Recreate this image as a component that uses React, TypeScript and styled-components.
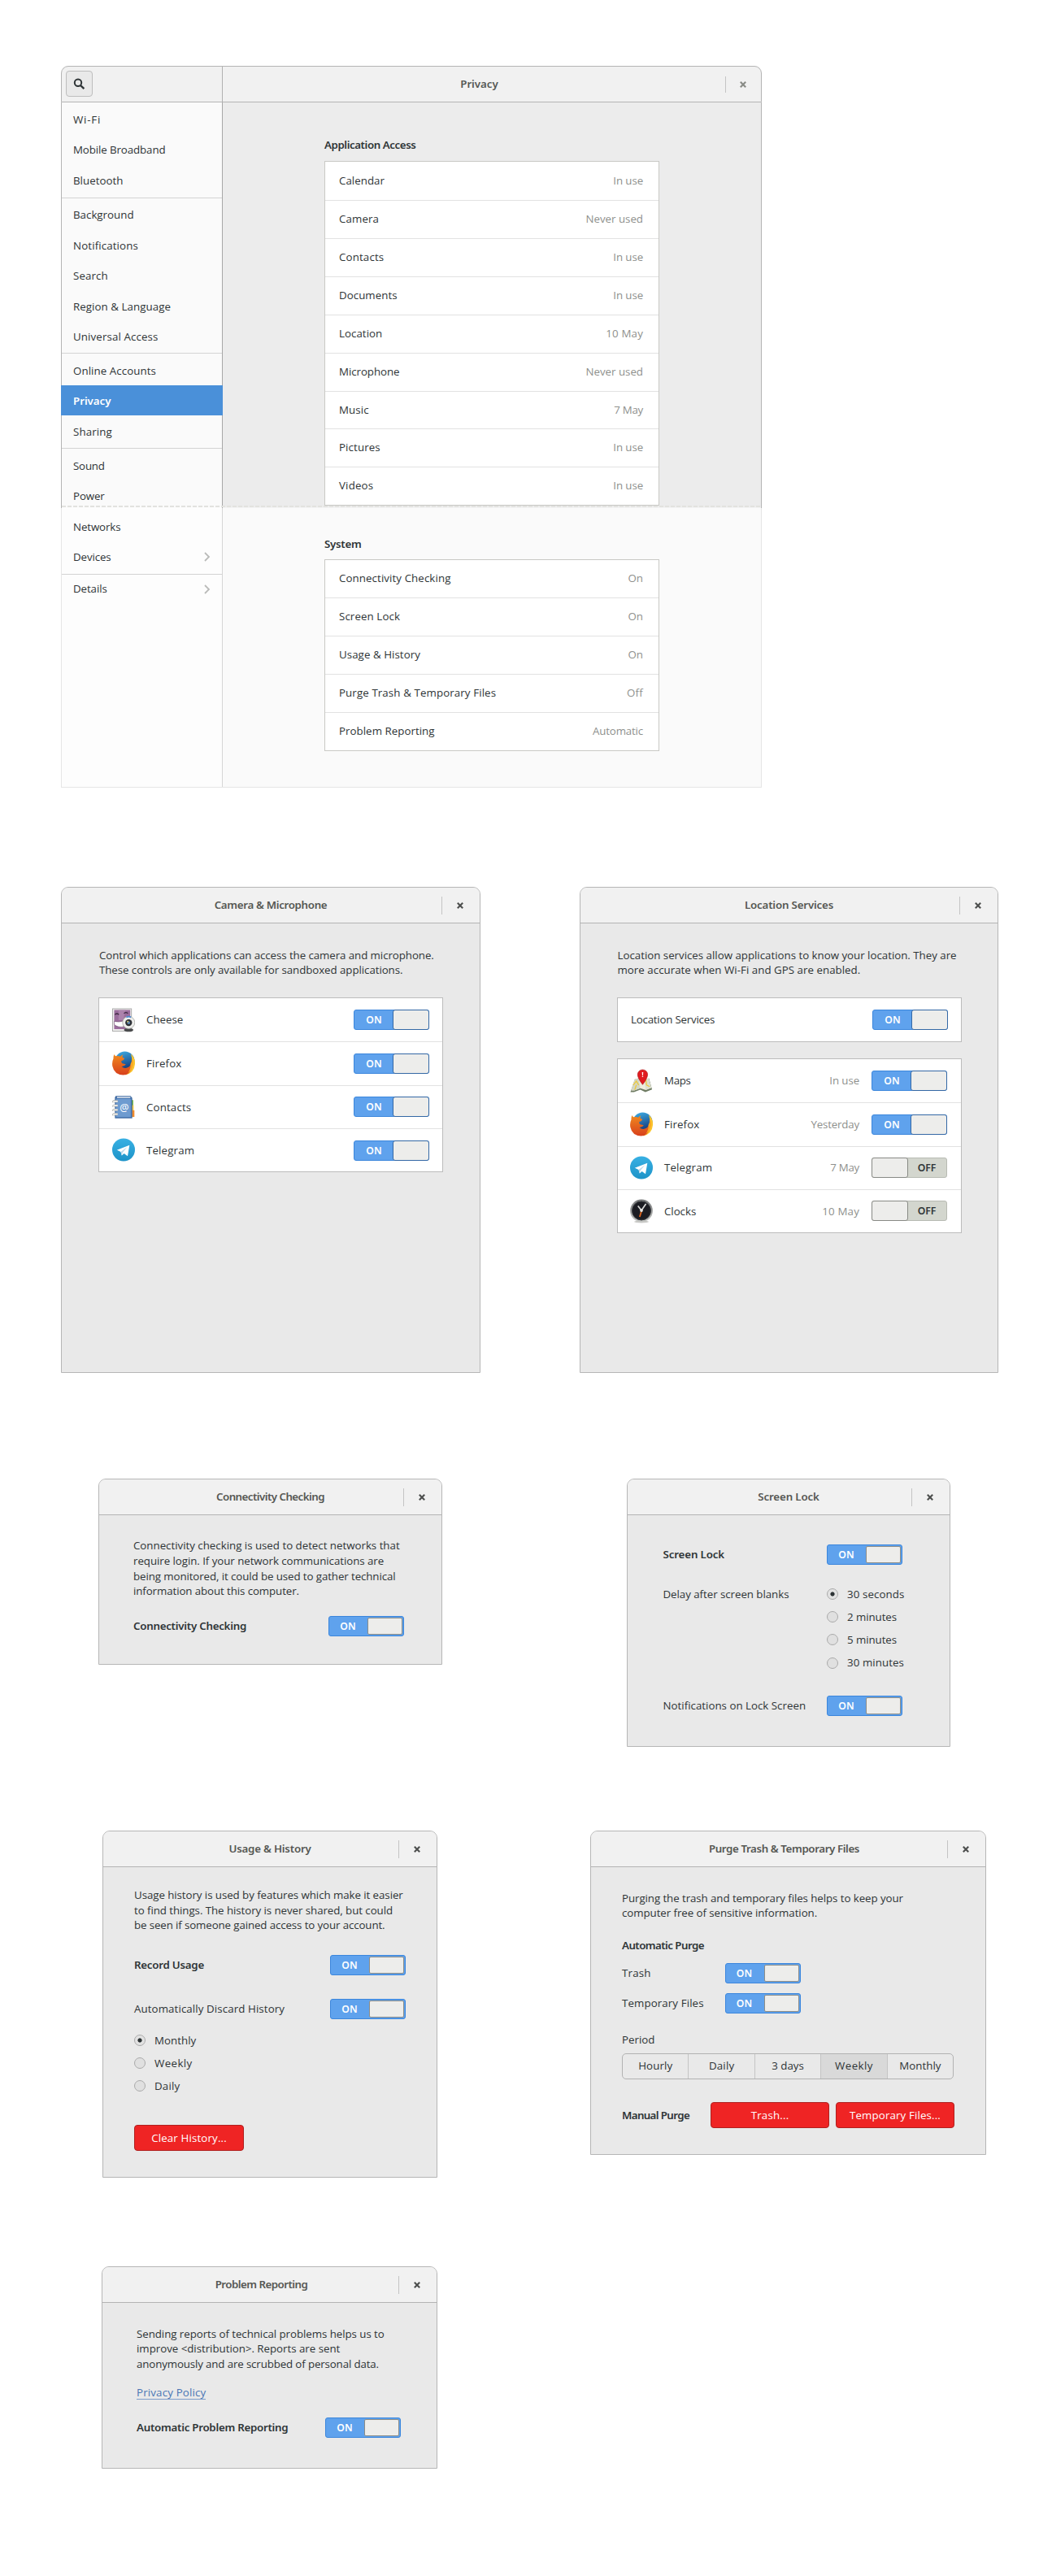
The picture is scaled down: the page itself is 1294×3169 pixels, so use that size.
import React from "react";
import styled, { createGlobalStyle, css } from "styled-components";

const Global = createGlobalStyle`
  body { margin: 0; background: #fff; }
  * { box-sizing: border-box; }
`;

const TRACK: Record<string, number> = {
  "Wi-Fi": 0.8, "Mobile Broadband": -0.1, Bluetooth: 0.03, Background: 0.01, Notifications: 0.13, Search: 0.1,
  "Region & Language": 0.06, "Universal Access": 0.12, "Online Accounts": 0.08, Sharing: 0.1, Sound: -0.2, Power: -0.1,
  Networks: -0.1, Devices: -0.11, Details: -0.08, Calendar: 0.04, Camera: 0.11, Contacts: 0.15, Documents: 0.04,
  Location: 0.04, Microphone: -0.05, Music: 0.1, Pictures: 0.11, Videos: 0.18, "Never used": -0.01, "In use": -0.1,
  "10 May": 0.17, Automatic: -0.16, Off: 0.24, "Connectivity Checking": 0.09, "Screen Lock": 0.1, "Usage & History": 0.06,
  "Purge Trash & Temporary Files": 0.11, "Problem Reporting": 0.04, Firefox: 0.12, Telegram: 0.15, Maps: -0.31,
  Clocks: -0.04, Yesterday: -0.16, "7 May": -0.27, "Location Services": -0.22,
  "Control which applications can access the camera and microphone.": -0.07,
  "These controls are only available for sandboxed applications.": -0.06,
  "Location services allow applications to know your location. They are": -0.01,
  "more accurate when Wi-Fi and GPS are enabled.": 0.03,
  "Connectivity checking is used to detect networks that": -0.01,
  "require login. If your network communications are": -0.05,
  "being monitored, it could be used to gather technical": -0.09,
  "information about this computer.": -0.09,
  "Usage history is used by features which make it easier": -0.06,
  "to find things. The history is never shared, but could": -0.06,
  "be seen if someone gained access to your account.": -0.11,
  "Purging the trash and temporary files helps to keep your": -0.07,
  "computer free of sensitive information.": -0.06,
  "Sending reports of technical problems helps us to": -0.05,
  "improve <distribution>. Reports are sent": -0.02,
  "anonymously and are scrubbed of personal data.": -0.13,
  "Notifications on Lock Screen": 0.01, "Automatically Discard History": 0.1, "Delay after screen blanks": -0.04,
  "30 seconds": 0.1, "2 minutes": -0.06, "5 minutes": -0.06, "30 minutes": 0.08, Monthly: 0.04, Weekly: 0.41, Daily: 0.18,
  "Clear History...": 0.15, Trash: 0.21, "Temporary Files": 0.11, Period: 0.02, Hourly: 0.1, "3 days": 0.02,
  "Trash...": 0.2, "Temporary Files...": 0.14, "Privacy Policy": 0.17,
};
const TRACK_BOLD: Record<string, number> = {
  "Application Access": -0.42, System: -0.27, Privacy: -0.03, "Camera & Microphone": -0.32, "Location Services": -0.18,
  "Connectivity Checking": -0.25, "Screen Lock": -0.13, "Usage & History": -0.21, "Purge Trash & Temporary Files": -0.39,
  "Problem Reporting": -0.53, "Automatic Problem Reporting": -0.26, "Record Usage": -0.24, "Automatic Purge": -0.55,
  "Manual Purge": -0.62,
};

const Page = styled.main`
  width: 1294px;
  height: 3169px;
  padding: 81px 0 0 75px;
  display: flex;
  flex-direction: column;
  overflow: hidden;
  font: 13.3px/18.7px "Open Sans", "Noto Sans", sans-serif;
  color: #2e3436;
`;

const Shelf = styled.section<{ $top: number; $indent?: number; $gap?: number }>`
  display: flex;
  align-items: flex-start;
  margin-top: ${(p) => p.$top}px;
  padding-left: ${(p) => p.$indent ?? 0}px;
  gap: ${(p) => p.$gap ?? 0}px;
`;

const Text = styled.span<{ $ls: number; $bold?: boolean; $muted?: boolean }>`
  white-space: nowrap;
  letter-spacing: ${(p) => p.$ls}px;
  ${(p) => p.$bold && css`font-family: "Noto Sans", sans-serif; font-weight: 600;`}
  ${(p) => p.$muted && css`color: #8e908d;`}
`;
function T({ t, bold, muted, ls }: { t: string; bold?: boolean; muted?: boolean; ls?: number }) {
  return <Text $ls={ls ?? (bold ? TRACK_BOLD : TRACK)[t] ?? 0} $bold={bold} $muted={muted}>{t}</Text>;
}

const Frame = styled.article<{ $w: number; $h: number }>`
  width: ${(p) => p.$w}px;
  height: ${(p) => p.$h}px;
  display: flex;
  flex-direction: column;
  border: 1px solid #b6b6b6;
  border-radius: 9px 9px 0 0;
  background: #e9e9e9;
  overflow: hidden;
`;

const HeaderBar = styled.header`
  flex: none;
  display: grid;
  grid-template-columns: 1fr auto;
  align-items: center;
  height: 44px;
  background: #f1f1f1;
  border-bottom: 1px solid #b4b4b4;
`;

const Title = styled.h2<{ $left?: number }>`
  margin: 0;
  padding-left: ${(p) => p.$left ?? 47}px;
  text-align: center;
  font-size: 13.3px;
  color: #555753;
  white-space: nowrap;
`;

const CloseBox = styled.div<{ $dim?: boolean; $w?: number }>`
  width: ${(p) => p.$w ?? 47}px;
  height: ${(p) => (p.$dim ? 20 : 22)}px;
  padding-right: 1.5px;
  display: flex;
  align-items: center;
  justify-content: center;
  border-left: 1px solid #c4c4c4;
  color: ${(p) => (p.$dim ? "#888a85" : "#4c4e4d")};
`;

const CloseIcon = () => (
  <svg width="8" height="8" viewBox="0 0 8 8" fill="none" stroke="currentColor" strokeWidth="2.1">
    <path d="M0.8 0.8 7.2 7.2M7.2 0.8 0.8 7.2" />
  </svg>
);

function Dialog(p: { w: number; h: number; title: string; ls?: number; titleLeft?: number; children: React.ReactNode }) {
  return (
    <Frame $w={p.w} $h={p.h}>
      <HeaderBar>
        <Title $left={p.titleLeft}><T t={p.title} bold ls={p.ls} /></Title>
        <CloseBox><CloseIcon /></CloseBox>
      </HeaderBar>
      {p.children}
    </Frame>
  );
}

/* ---------- switch ---------- */
const Track = styled.span<{ $on: boolean }>`
  flex: none;
  display: flex;
  width: 93px;
  height: 25px;
  border: 1px solid ${(p) => (p.$on ? "#3b86dc" : "#b7bab3")};
  border-radius: 3px;
  background: ${(p) => (p.$on ? "#5fa2ed" : "#d3d6ce")};
  color: ${(p) => (p.$on ? "#fff" : "#2e3436")};
`;
const State = styled.span`
  flex: 1;
  text-align: center;
  font: 600 12.2px/23px "Noto Sans", sans-serif;
`;
const Knob = styled.span<{ $on: boolean; $inset?: boolean }>`
  width: 45px;
  margin: -1px;
  border: 1px solid ${(p) => (p.$on ? "#3468a5" : "#888a85")};
  border-radius: 3px;
  background: #ededeb;
  ${(p) => p.$inset && css`
    width: 43px;
    margin: 1px;
    border-color: #8c8d88;
    border-radius: 2px;
  `}
`;
function Switch({ on = true, inset }: { on?: boolean; inset?: boolean }) {
  return (
    <Track $on={on}>
      {!on && <Knob $on={false} />}
      <State>{on ? "ON" : "OFF"}</State>
      {on && <Knob $on $inset={inset} />}
    </Track>
  );
}

/* ---------- main window ---------- */
const Main = styled.article`
  width: 862px;
  height: 888px;
  display: flex;
  flex-direction: column;
`;
const MainHeader = styled.header`
  flex: none;
  display: flex;
  height: 45px;
  border: 1px solid #b4b4b4;
  border-radius: 9px 9px 0 0;
  background: #f1f1f1;
`;
const HeaderLeft = styled.div`
  width: 198px;
  padding: 5px;
  border-right: 1px solid #b0b0b0;
`;
const HeaderRight = styled.div`
  flex: 1;
  display: grid;
  grid-template-columns: 1fr auto;
  align-items: center;
`;
const SearchButton = styled.button`
  display: flex;
  align-items: center;
  justify-content: center;
  width: 33px;
  height: 32px;
  padding: 0;
  border: 1px solid #bdbdbd;
  border-radius: 4px;
  background: #e9e9e9;
  color: #2e3436;
`;
const MainBody = styled.div`
  position: relative;
  flex: 1;
  display: flex;
  border-style: solid;
  border-width: 0 1px 1px;
  border-image: linear-gradient(#b4b4b4 0 499px, #e6e6e6 499px) 1;
  background: linear-gradient(#ececec 0 498px, #fafafa 499px);
  &::after {
    content: "";
    position: absolute;
    left: 0;
    right: 0;
    top: 496px;
    height: 2px;
    background: repeating-linear-gradient(90deg, #e2e2df 0 5px, transparent 5px 7px);
  }
`;
const Sidebar = styled.nav`
  width: 197px;
  padding-top: 1px;
  background: linear-gradient(#fafafa 0 498px, #fdfdfd 499px);
`;
const Divider = styled.div`
  width: 1px;
  background: linear-gradient(#a8a8a8 0 499px, #d6d6d6 499px);
`;
const NavRow = styled.div<{ $active?: boolean }>`
  display: flex;
  align-items: center;
  justify-content: space-between;
  height: 37.5px;
  padding: 2.4px 14px 0 14px;
  ${(p) => p.$active && css`
    position: relative;
    margin: 0 -1px;
    padding: 2px 15px 0 15px;
    background: #4a90d9;
    color: #fff;
  `}
`;
const NavRule = styled.hr<{ $before: number; $after: number }>`
  height: 1px;
  border: 0;
  background: #d3d3d3;
  margin: ${(p) => p.$before}px 0 ${(p) => p.$after}px;
`;
const Content = styled.div`
  padding: 41.6px 125px 0;
`;
const Heading = styled.h3<{ $top?: number; $bottom: number }>`
  margin: ${(p) => p.$top ?? 0}px 0 ${(p) => p.$bottom}px;
  font-size: 13.3px;
  line-height: 20px;
`;
const List = styled.ul<{ $w: number; $warm?: boolean }>`
  width: ${(p) => p.$w}px;
  margin: 0;
  padding: 0;
  list-style: none;
  background: #fff;
  border: 1px solid ${(p) => (p.$warm ? "#c9c9c5" : "#bcbcbc")};
`;
const Item = styled.li<{ $h: number; $left: number; $right: number; $lift?: number }>`
  display: flex;
  align-items: center;
  height: ${(p) => p.$h}px;
  padding: 0 ${(p) => p.$right}px ${(p) => p.$lift ?? 0}px ${(p) => p.$left}px;
  & + & { border-top: 1px solid #e2e2e2; }
`;
const Spacer = styled.span`flex: 1;`;
const Chevron = () => (
  <svg width="8" height="12" viewBox="0 0 8 12" fill="none" stroke="#b9bab8" strokeWidth="1.8">
    <path d="M1 1 6 6 1 11" />
  </svg>
);

type Nav = { t: string; active?: boolean; more?: boolean } | { before: number; after: number };
const NAV: Nav[] = [
  { t: "Wi-Fi" }, { t: "Mobile Broadband" }, { t: "Bluetooth" },
  { before: 3.5, after: 0.5 },
  { t: "Background" }, { t: "Notifications" }, { t: "Search" }, { t: "Region & Language" }, { t: "Universal Access" },
  { before: 2, after: 1 },
  { t: "Online Accounts" }, { t: "Privacy", active: true }, { t: "Sharing" },
  { before: 2.5, after: 1 },
  { t: "Sound" }, { t: "Power" }, { t: "Networks" }, { t: "Devices", more: true },
  { before: 3, after: -2.3 },
  { t: "Details", more: true },
];
const ACCESS = [
  ["Calendar", "In use"], ["Camera", "Never used"], ["Contacts", "In use"], ["Documents", "In use"], ["Location", "10 May"],
  ["Microphone", "Never used"], ["Music", "7 May"], ["Pictures", "In use"], ["Videos", "In use"],
];
const SYSTEM = [
  ["Connectivity Checking", "On"], ["Screen Lock", "On"], ["Usage & History", "On"],
  ["Purge Trash & Temporary Files", "Off"], ["Problem Reporting", "Automatic"],
];

function SettingList({ rows }: { rows: string[][] }) {
  return (
    <List $w={412} $warm>
      {rows.map(([name, value]) => (
        <Item key={name} $h={46.85} $left={17} $right={19} $lift={1}>
          <T t={name} /><Spacer /><T t={value} muted />
        </Item>
      ))}
    </List>
  );
}

function PrivacyWindow() {
  return (
    <Main>
      <MainHeader>
        <HeaderLeft>
          <SearchButton aria-label="Search">
            <svg width="15" height="15" viewBox="0 0 15 15" fill="none" stroke="currentColor">
              <circle cx="6" cy="5.8" r="4.2" strokeWidth="2" />
              <path d="M9 9 13.4 13.2" strokeWidth="2.4" />
            </svg>
          </SearchButton>
        </HeaderLeft>
        <HeaderRight>
          <Title $left={13}><T t="Privacy" bold /></Title>
          <CloseBox $dim $w={44}><CloseIcon /></CloseBox>
        </HeaderRight>
      </MainHeader>
      <MainBody>
        <Sidebar>
          {NAV.map((n, i) => "t" in n ? (
            <NavRow key={i} $active={n.active}><T t={n.t} bold={n.active} />{n.more && <Chevron />}</NavRow>
          ) : <NavRule key={i} $before={n.before} $after={n.after} />)}
        </Sidebar>
        <Divider />
        <Content>
          <Heading $bottom={10.9}><T t="Application Access" bold /></Heading>
          <SettingList rows={ACCESS} />
          <Heading $top={36.5} $bottom={9}><T t="System" bold /></Heading>
          <SettingList rows={SYSTEM} />
        </Content>
      </MainBody>
    </Main>
  );
}

/* ---------- application icons ---------- */
const IconSlot = styled.span`
  flex: none;
  display: flex;
  width: 28px;
  height: 30px;
  margin-right: 14px;
`;
const Cheese = () => (
  <svg width="29" height="30" viewBox="0 0 29 30">
    <rect x="0.5" y="0.5" width="24" height="28.5" fill="#f3f3f1" stroke="#a9a9a9" />
    <rect x="2.5" y="2" width="20.5" height="24.5" fill="#9a6c9c" />
    <path d="M8 2h9l-3 13H8z" fill="#b48bb4" opacity=".7" />
    <path d="M3.5 8q2.5-2.5 5 0M15 6.500q2.500-2.500 5 0" fill="none" stroke="#402a44" strokeWidth="1.300" />
    <path d="M2.500 16.500q6 1.500 12-.5v7.500q-8 1-12-3z" fill="#fff" stroke="#6c4a6e" strokeWidth=".6" />
    <ellipse cx="21" cy="27.500" rx="6" ry="2.300" fill="#4a4b4d" />
    <circle cx="21" cy="18" r="7.800" fill="#eeeeec" stroke="#a5a6a3" strokeWidth=".8" />
    <path d="M18 11.300q3-1.800 6 0" fill="none" stroke="#4b87cf" strokeWidth="1.800" />
    <circle cx="21" cy="18.200" r="4.300" fill="#2b2e33" />
    <circle cx="21" cy="18.200" r="2" fill="#5f87b0" />
    <circle cx="19.800" cy="16.800" r=".9" fill="#f4e36a" />
  </svg>
);
const Firefox = () => (
  <svg width="28" height="30" viewBox="0 0 28 30">
    <defs>
      <linearGradient id="fxo" x1="0" y1="0" x2="0" y2="1"><stop offset="0" stopColor="#f08a1f" /><stop offset="1" stopColor="#d8401c" /></linearGradient>
      <linearGradient id="fxb" x1="0" y1="0" x2="0.300" y2="1"><stop offset="0" stopColor="#3fb1e8" /><stop offset="1" stopColor="#123a7c" /></linearGradient>
    </defs>
    <circle cx="15.500" cy="12.500" r="12" fill="url(#fxb)" />
    <path d="M23 3.500q5.500 5 5 12.500-.8 11-12 13.500 9-7 8.600-15.500Q24.500 8 23 3.500z" fill="#fbc52d" />
    <path d="M2.500 4Q3 6 4.500 6.300q3-1 5.500.4 1.500-2 3.500-2.200-1.300 1.800-.8 3.500 2.500.2 2.300 1.500-1 2-3.500 2.500-.8 2 1 3.200 2.500.3 4.300 1-2 3-5.300 2.800 4 3.700 9 .5 4-3 3.300-9.500 2 4.500.7 9.500Q22 29.500 13.500 29.500 2.500 29 .3 18.500-.5 13 1.500 9.500 1.300 6 2.500 4z" fill="url(#fxo)" />
    <path d="M24.500 9q2.500 5 .6 10.500-1.600 5-5.600 7.500 4-7 3-11 2-3 2-7z" fill="#f9a825" />
  </svg>
);
const ContactsIcon = () => (
  <svg width="29" height="31" viewBox="0 0 29 31">
    <path d="M25 6h1.800v7H25z" fill="#6cb52d" /><path d="M25 12.500h2.300v7H25z" fill="#f0c53a" /><path d="M25 19h3.300v8.500H25z" fill="#ef8a2c" />
    <path d="M4.500.8h19l2 2.500v26H3.500V2.500z" fill="#3a669f" />
    <path d="M6 1.800h17.500l-.5 1.500H6z" fill="#e9eef5" />
    <rect x="4.500" y="4" width="19.500" height="24" fill="#6e9bd0" stroke="#4a78b4" strokeWidth=".8" />
    <text x="15.300" y="20.500" textAnchor="middle" fontFamily="Noto Sans, sans-serif" fontSize="13" fill="#fff">@</text>
    <g fill="none" stroke="#9b9c99" strokeWidth="3"><path d="M7 7.500H3q-1.500 0-1.500 1.500M7 13H3q-1.500 0-1.500 1.500M7 18.500H3q-1.500 0-1.500 1.500M7 24H3q-1.500 0-1.500 1.500" /></g>
    <g fill="none" stroke="#f2f2f0" strokeWidth="1.800"><path d="M7 7.500H3q-1.500 0-1.500 1.500M7 13H3q-1.500 0-1.500 1.500M7 18.500H3q-1.500 0-1.500 1.500M7 24H3q-1.500 0-1.500 1.500" /></g>
  </svg>
);
const Telegram = () => (
  <svg width="28" height="29" viewBox="0 0 28 29">
    <defs><linearGradient id="tg" x1="0" y1="0" x2="0" y2="1"><stop offset="0" stopColor="#38b0e3" /><stop offset="1" stopColor="#1d93c8" /></linearGradient></defs>
    <circle cx="14" cy="14.500" r="14" fill="url(#tg)" />
    <path d="M5.800 14.700 21.300 8.700 19 22.300 14.600 19 11.800 21.500 10.500 17z" fill="#fff" />
    <path d="M10.500 17 18.500 11 12.800 18 11.800 21.500z" fill="#bcd9ea" />
  </svg>
);
const MapsIcon = () => (
  <svg width="29" height="30" viewBox="0 0 29 30">
    <path d="M6 13 11 11.500 18 14 24 11.500 28 25.500 19.500 29 13 26 5 29H.5z" fill="#6e7b63" />
    <path d="M6 12.500 11 11.500 18 13.500 23.500 11.500 27 23.500 20 26.500 13 24 5.500 27H1.500z" fill="#eeecdc" />
    <path d="M11 11.500 13 24 5.500 27H1.500L6 12.500z" fill="#d3d6c6" /><path d="M18 13.500 20 26.500 27 23.500 23.500 11.500z" fill="#dcdfd0" />
    <path d="M4 20 8 15 11 20M20 13 21 20 25 22M8 20 6 26" fill="none" stroke="#ecc93f" strokeWidth="1.400" />
    <path d="M16 19.500Q9.600 11 9.600 6.600a6.400 6.200 0 0 1 12.800 0Q22.400 11 16 19.500z" fill="#e01b20" stroke="#a90f12" strokeWidth=".6" />
    <path d="M15.200 3.500h1.600l-.3 4.200h-1zM15.300 8.500h1.400v1.200h-1.400z" fill="#fff" />
  </svg>
);
const Clocks = () => (
  <svg width="28" height="30" viewBox="0 0 28 30">
    <defs><linearGradient id="ck" x1="0" y1="0" x2="0" y2="1"><stop offset="0" stopColor="#77797a" /><stop offset="1" stopColor="#c3c5c2" /></linearGradient></defs>
    <ellipse cx="14" cy="28" rx="9" ry="1.500" fill="#c9c9c7" />
    <circle cx="14" cy="14.500" r="12.800" fill="#1b1c22" stroke="url(#ck)" strokeWidth="2.200" />
    <circle cx="14" cy="14.500" r="11.300" fill="none" stroke="#34363a" strokeWidth="1" />
    <path d="M14 14 19.500 6M14 14 9.700 8.500" stroke="#d9dad8" strokeWidth="1.700" fill="none" />
    <path d="M14 15 11.800 22" stroke="#e0641c" strokeWidth="1.800" />
    <circle cx="14" cy="14" r="1.900" fill="#e6e6e4" />
  </svg>
);

/* ---------- dialog parts ---------- */
const Body = styled.div<{ $top: number; $left: number; $right: number }>`
  display: flex;
  flex-direction: column;
  align-items: stretch;
  padding: ${(p) => p.$top}px ${(p) => p.$right}px 0 ${(p) => p.$left}px;
`;
const ParaBox = styled.p<{ $left: number }>`
  display: flex;
  flex-direction: column;
  margin: 0;
  padding-left: ${(p) => p.$left}px;
`;
const Para = ({ lines, left = 0 }: { lines: string[]; left?: number }) => (
  <ParaBox $left={left}>{lines.map((l) => <T key={l} t={l} />)}</ParaBox>
);
const Line = styled.div<{ $top?: number; $gap?: number; $h?: number }>`
  display: flex;
  align-items: center;
  height: ${(p) => p.$h ?? 25}px;
  margin-top: ${(p) => p.$top ?? 0}px;
  gap: ${(p) => p.$gap ?? 0}px;
`;
const FieldName = styled.span`
  width: 126.5px;
`;
const RadioGroup = styled.div<{ $top?: number }>`
  display: flex;
  flex-direction: column;
  width: 93px;
  gap: 9.2px;
  margin-top: ${(p) => p.$top ?? 0}px;
`;
const RadioRow = styled.label`
  display: flex;
  align-items: center;
  gap: 11px;
  height: 19px;
`;
const Dot = styled.span<{ $on?: boolean }>`
  flex: none;
  width: 14px;
  height: 14px;
  border: 1px solid #aaa;
  border-radius: 50%;
  background: ${(p) => (p.$on ? "radial-gradient(circle, #2e3436 0 2.2px, #e2e2e2 3px)" : "#e0e0e0")};
`;
const Radio = ({ t, on }: { t: string; on?: boolean }) => (
  <RadioRow><Dot $on={on} /><T t={t} /></RadioRow>
);
const DangerButton = styled.button<{ $w: number }>`
  flex: none;
  width: ${(p) => p.$w}px;
  height: 32px;
  padding: 0;
  border: 1px solid #b0201f;
  border-radius: 4px;
  background: #ef2424;
  color: #fff;
  font: inherit;
`;
const Segments = styled.div`
  display: flex;
  width: 408px;
  height: 32px;
  margin-top: 7px;
  border: 1px solid #b2b2b2;
  border-radius: 5px;
  overflow: hidden;
`;
const Segment = styled.div<{ $active?: boolean }>`
  flex: 1;
  display: flex;
  align-items: center;
  justify-content: center;
  background: ${(p) => (p.$active ? "#d9d9d9" : "transparent")};
  & + & { border-left: 1px solid #c4c4c4; }
`;
const Columns = styled.div<{ $top: number }>`
  display: flex;
  justify-content: space-between;
  align-items: flex-start;
  margin-top: ${(p) => p.$top}px;
`;
const Link = styled.a`
  align-self: flex-start;
  margin-top: 17px;
  color: #4a76b4;
  line-height: 16px;
  border-bottom: 1px solid #7f9fcb;
`;
const Stack = styled.div<{ $gap: number; $top: number }>`
  display: flex;
  flex-direction: column;
  gap: ${(p) => p.$gap}px;
  margin-top: ${(p) => p.$top}px;
`;
const Value = styled.span`
  margin-right: 15px;
`;

const CAMERA_APPS = [
  { t: "Cheese", icon: <Cheese /> }, { t: "Firefox", icon: <Firefox /> },
  { t: "Contacts", icon: <ContactsIcon /> }, { t: "Telegram", icon: <Telegram /> },
];
const LOCATION_APPS = [
  { t: "Maps", v: "In use", on: true, icon: <MapsIcon /> }, { t: "Firefox", v: "Yesterday", on: true, icon: <Firefox /> },
  { t: "Telegram", v: "7 May", on: false, icon: <Telegram /> }, { t: "Clocks", v: "10 May", on: false, icon: <Clocks /> },
];
const PERIODS = ["Hourly", "Daily", "3 days", "Weekly", "Monthly"];

export default function App() {
  return (
    <Page>
      <Global />
      <PrivacyWindow />

      <Shelf $top={122} $gap={122}>
        <Dialog w={516} h={598} title="Camera & Microphone">
          <Body $top={29.5} $left={45} $right={45}>
            <Para left={1} lines={[
              "Control which applications can access the camera and microphone.",
              "These controls are only available for sandboxed applications.",
            ]} />
            <Stack $top={24} $gap={0}>
              <List $w={424}>
                {CAMERA_APPS.map((a) => (
                  <Item key={a.t} $h={53.4} $left={16} $right={16}>
                    <IconSlot>{a.icon}</IconSlot><T t={a.t} /><Spacer /><Switch />
                  </Item>
                ))}
              </List>
            </Stack>
          </Body>
        </Dialog>
        <Dialog w={515} h={598} title="Location Services">
          <Body $top={29.5} $left={45} $right={45}>
            <Para left={0.5} lines={[
              "Location services allow applications to know your location. They are",
              "more accurate when Wi-Fi and GPS are enabled.",
            ]} />
            <Stack $top={24} $gap={20}>
              <List $w={424}>
                <Item $h={53} $left={16} $right={16}><T t="Location Services" /><Spacer /><Switch /></Item>
              </List>
              <List $w={424}>
                {LOCATION_APPS.map((a) => (
                  <Item key={a.t} $h={53.3} $left={15} $right={17}>
                    <IconSlot>{a.icon}</IconSlot><T t={a.t} /><Spacer /><Value><T t={a.v} muted /></Value><Switch on={a.on} />
                  </Item>
                ))}
              </List>
            </Stack>
          </Body>
        </Dialog>
      </Shelf>

      <Shelf $top={130} $indent={46} $gap={227}>
        <Dialog w={423} h={229} title="Connectivity Checking" ls={-0.54}>
          <Body $top={28.3} $left={42} $right={46}>
            <Para lines={[
              "Connectivity checking is used to detect networks that",
              "require login. If your network communications are",
              "being monitored, it could be used to gather technical",
              "information about this computer.",
            ]} />
            <Line $top={21}><T t="Connectivity Checking" bold /><Spacer /><Switch inset /></Line>
          </Body>
        </Dialog>
        <Dialog w={398} h={330} title="Screen Lock">
          <Body $top={36} $left={43.5} $right={58}>
            <Line><T t="Screen Lock" bold /><Spacer /><Switch inset /></Line>
            <Columns $top={26.5}>
              <T t="Delay after screen blanks" />
              <RadioGroup>
                <Radio t="30 seconds" on /><Radio t="2 minutes" /><Radio t="5 minutes" /><Radio t="30 minutes" />
              </RadioGroup>
            </Columns>
            <Line $top={30.5}><T t="Notifications on Lock Screen" /><Spacer /><Switch inset /></Line>
          </Body>
        </Dialog>
      </Shelf>

      <Shelf $top={103} $indent={51} $gap={188}>
        <Dialog w={412} h={427} title="Usage & History">
          <Body $top={25} $left={38} $right={38}>
            <Para lines={[
              "Usage history is used by features which make it easier",
              "to find things. The history is never shared, but could",
              "be seen if someone gained access to your account.",
            ]} />
            <Line $top={27}><T t="Record Usage" bold /><Spacer /><Switch inset /></Line>
            <Line $top={29}><T t="Automatically Discard History" /><Spacer /><Switch inset /></Line>
            <RadioGroup $top={16.5}><Radio t="Monthly" on /><Radio t="Weekly" /><Radio t="Daily" /></RadioGroup>
            <Line $top={38} $h={32}><DangerButton $w={135}><T t="Clear History..." /></DangerButton></Line>
          </Body>
        </Dialog>
        <Dialog w={487} h={399} title="Purge Trash & Temporary Files" titleLeft={37}>
          <Body $top={28.6} $left={38} $right={38}>
            <Para lines={[
              "Purging the trash and temporary files helps to keep your",
              "computer free of sensitive information.",
            ]} />
            <Line $top={21} $h={19}><T t="Automatic Purge" bold /></Line>
            <Line $top={11.5}><FieldName><T t="Trash" /></FieldName><Switch inset /></Line>
            <Line $top={12.5}><FieldName><T t="Temporary Files" /></FieldName><Switch inset /></Line>
            <Line $top={22.5} $h={19}><T t="Period" /></Line>
            <Segments>
              {PERIODS.map((p) => <Segment key={p} $active={p === "Weekly"}><T t={p} /></Segment>)}
            </Segments>
            <Line $top={28} $h={33} $gap={8}>
              <T t="Manual Purge" bold /><Spacer />
              <DangerButton $w={146}><T t="Trash..." /></DangerButton><DangerButton $w={146}><T t="Temporary Files..." /></DangerButton>
            </Line>
          </Body>
        </Dialog>
      </Shelf>

      <Shelf $top={109} $indent={50}>
        <Dialog w={413} h={249} title="Problem Reporting" titleLeft={27}>
          <Body $top={28.6} $left={42} $right={44}>
            <Para lines={[
              "Sending reports of technical problems helps us to",
              "improve <distribution>. Reports are sent",
              "anonymously and are scrubbed of personal data.",
            ]} />
            <Link><T t="Privacy Policy" /></Link>
            <Line $top={22.4}><T t="Automatic Problem Reporting" bold /><Spacer /><Switch inset /></Line>
          </Body>
        </Dialog>
      </Shelf>
    </Page>
  );
}
